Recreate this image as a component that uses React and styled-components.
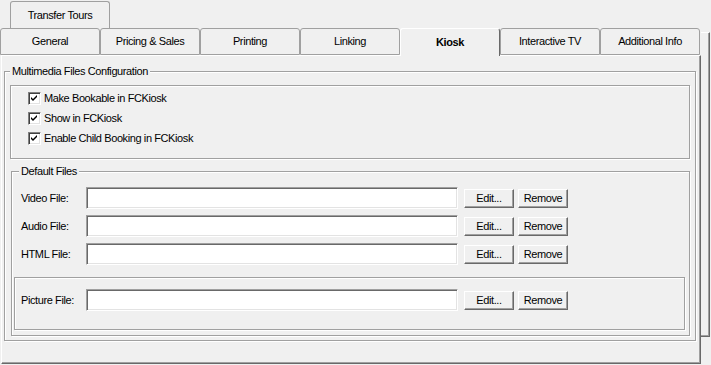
import React from "react";
import styled, { createGlobalStyle } from "styled-components";

const GlobalStyle = createGlobalStyle`
  html, body {
    margin: 0;
    padding: 0;
    background: #f0f0f0;
  }
  body {
    font-family: "Liberation Sans", Arial, sans-serif;
    font-size: 11px;
    letter-spacing: -0.4px;
    color: #000;
    overflow: hidden;
  }
`;

const Screen = styled.div`
  display: flex;
  align-items: flex-start;
  width: 711px;
  height: 365px;
`;

const TabControl = styled.div`
  width: 701px;
  display: flex;
  flex-direction: column;
`;

const TabRow = styled.div`
  display: flex;
  align-items: flex-start;
  height: 27px;
  margin-top: ${(p) => p.$top || 0}px;
  padding-left: ${(p) => p.$indent || 0}px;
`;

const Tab = styled.div`
  width: 100px;
  height: ${(p) => (p.$active ? 28 : 27)}px;
  box-sizing: border-box;
  display: flex;
  align-items: center;
  justify-content: center;
  border: 1px solid #a0a0a0;
  border-bottom: ${(p) => (p.$back ? "none" : "1px solid #a0a0a0")};
  border-radius: 3px 3px 0 0;
  background: #f0f0f0;
  line-height: 25px;
  ${(p) =>
    p.$active &&
    `
    position: relative;
    z-index: 1;
    font-weight: bold;
    border-color: #fff #696969 transparent #fff;
    border-bottom: none;
  `}
`;

const Page = styled.div`
  margin-left: 1px;
  width: 700px;
  height: 309px;
  box-sizing: border-box;
  border-top: 1px solid #fff;
  border-left: 1px solid #fff;
  border-right: 1px solid #696969;
  border-bottom: 1px solid #696969;
  box-shadow: inset -1px -1px 0 #a0a0a0;
  padding: 8px 4px 0 2px;
`;

const BackStrip = styled.div`
  width: 9px;
  height: 305px;
  margin-top: 32px;
  box-sizing: border-box;
  border-top: 1px solid #fff;
  border-right: 1px solid #696969;
  border-bottom: 1px solid #696969;
  box-shadow: inset -1px -1px 0 #a0a0a0;
`;

const Group = styled.fieldset`
  margin: ${(p) => p.$margin || "0"};
  padding: ${(p) => p.$pad};
  min-width: 0;
  border: 1px solid #a0a0a0;
  box-shadow: 1px 1px 0 #fff, inset 1px 1px 0 #fff;
`;

const Legend = styled.legend`
  padding: 0 2px;
  margin-left: ${(p) => p.$shift || 0}px;
  line-height: 14px;
  background: #f0f0f0;
`;

const Etched = styled.div`
  box-sizing: border-box;
  height: ${(p) => p.$h}px;
  margin: ${(p) => p.$margin || "0"};
  padding: ${(p) => p.$pad || "0"};
  border: 1px solid #a0a0a0;
  box-shadow: 1px 1px 0 #fff, inset 1px 1px 0 #fff;
`;

const CheckRow = styled.label`
  display: flex;
  align-items: center;
  height: 20px;
  padding-left: 17px;
  gap: 3px;
`;

const Box = styled.span`
  width: 13px;
  height: 13px;
  box-sizing: border-box;
  background: #fff;
  border: 1px solid;
  border-color: #808080 #fff #fff #808080;
  box-shadow: inset 1px 1px 0 #404040, inset -1px -1px 0 #e3e3e3;
  display: flex;
`;

const FileRow = styled.div`
  display: flex;
  align-items: center;
  height: 22px;
  & + & {
    margin-top: 6px;
  }
`;

const FileLabel = styled.span`
  width: 65px;
`;

const FileInput = styled.input`
  width: 372px;
  height: 22px;
  box-sizing: border-box;
  margin: 0 6px 0 0;
  padding: 0 3px;
  background: #fff;
  border: 1px solid;
  border-color: #a0a0a0 #fff #fff #a0a0a0;
  box-shadow: inset 1px 1px 0 #696969, inset -1px -1px 0 #e3e3e3;
  outline: none;
  font: inherit;
`;

const Button = styled.button`
  width: 50px;
  height: 19px;
  margin-right: 4px;
  padding: 0;
  box-sizing: border-box;
  background: #f0f0f0;
  border: 1px solid;
  border-color: #fff #696969 #696969 #fff;
  box-shadow: inset -1px -1px 0 #a0a0a0;
  font: inherit;
  letter-spacing: inherit;
  color: #000;
`;

function Check({ children }) {
  return (
    <CheckRow>
      <Box>
        <svg width="11" height="11" viewBox="0 0 11 11">
          <polygon points="2,4 4,6 8,2 8,4 4,8 2,6" fill="#000" />
        </svg>
      </Box>
      {children}
    </CheckRow>
  );
}

function FileField({ label }) {
  return (
    <FileRow>
      <FileLabel>{label}</FileLabel>
      <FileInput type="text" />
      <Button>Edit...</Button>
      <Button>Remove</Button>
    </FileRow>
  );
}

const tabs = [
  "General",
  "Pricing & Sales",
  "Printing",
  "Linking",
  "Kiosk",
  "Interactive TV",
  "Additional Info",
];

export default function App() {
  return (
    <>
      <GlobalStyle />
      <Screen>
        <TabControl>
          <TabRow $top={1} $indent={10}>
            <Tab $back>Transfer Tours</Tab>
          </TabRow>
          <TabRow>
            {tabs.map((t) => (
              <Tab key={t} $active={t === "Kiosk"}>
                {t}
              </Tab>
            ))}
          </TabRow>
          <Page>
            <Group $pad="0 5px 4px 5px">
              <Legend>Multimedia Files Configuration</Legend>
              <Etched $h={74} $margin="7px 0 0 0" $pad="2px 0 0 0">
                <Check>Make Bookable in FCKiosk</Check>
                <Check>Show in FCKiosk</Check>
                <Check>Enable Child Booking in FCKiosk</Check>
              </Etched>
              <Group $margin="5px 0 0 1px" $pad="9px 0 5px 9px">
                <Legend $shift={-2}>Default Files</Legend>
                <FileField label="Video File:" />
                <FileField label="Audio File:" />
                <FileField label="HTML File:" />
                <Etched $h={53} $margin="12px 4px 0 -7px" $pad="11px 0 0 6px">
                  <FileField label="Picture File:" />
                </Etched>
              </Group>
            </Group>
          </Page>
        </TabControl>
        <BackStrip />
      </Screen>
    </>
  );
}
